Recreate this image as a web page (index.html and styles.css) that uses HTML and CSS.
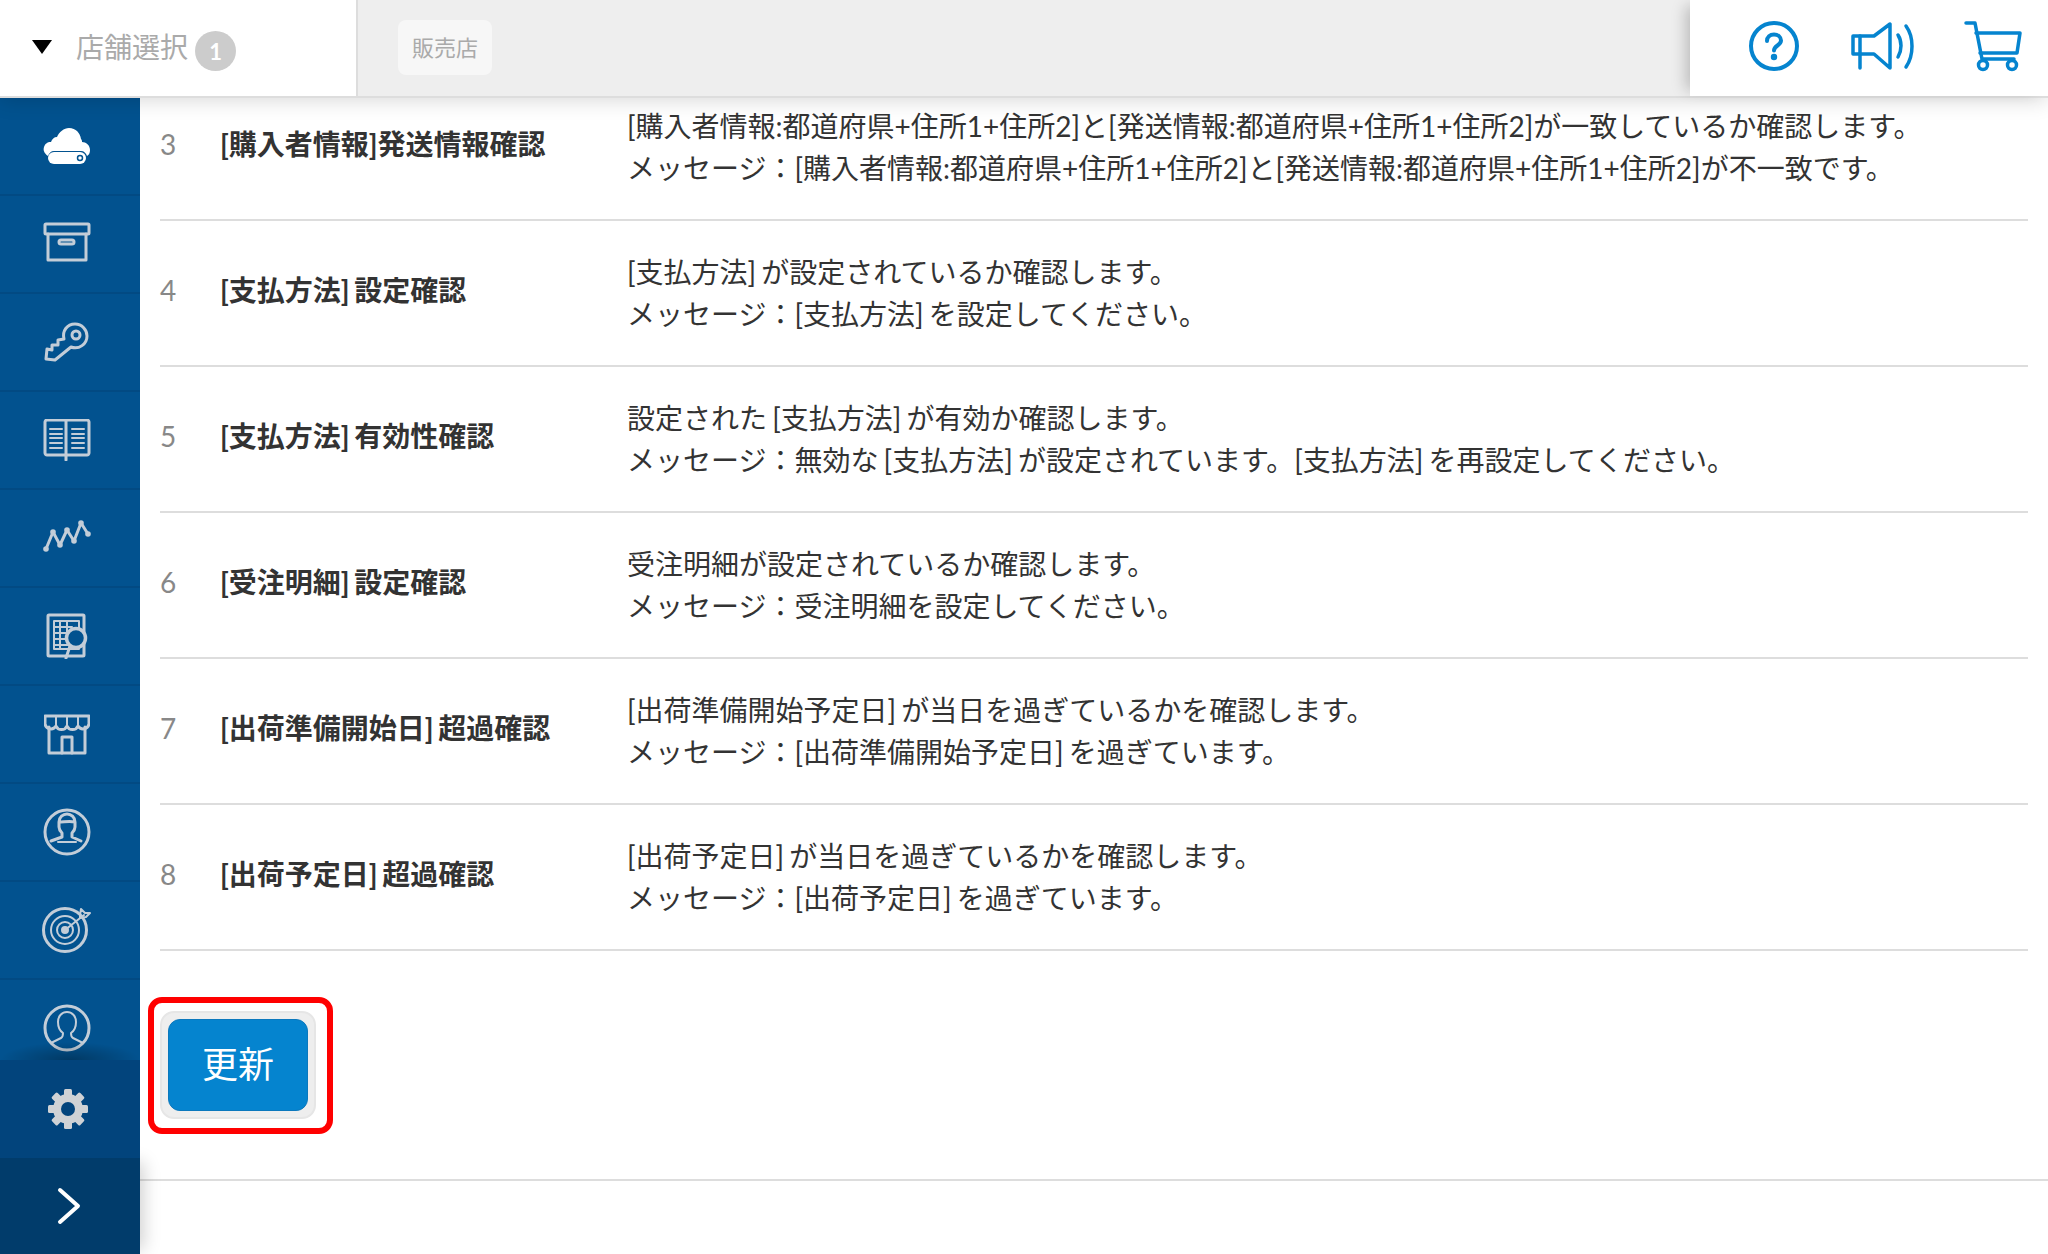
FILE: index.html
```html
<!DOCTYPE html>
<html lang="ja">
<head>
<meta charset="utf-8">
<title>設定</title>
<link rel="stylesheet" href="styles.css">
</head>
<body>
<div class="app">
  <header class="topbar">
    <div class="store-select">
      <span class="caret"></span>
      <span class="store-label">店舗選択</span>
      <span class="store-count">1</span>
    </div>
    <div class="tabs"><span class="tab">販売店</span></div>
    <div class="actions">
      <svg class="act" width="52" height="52" viewBox="0 0 52 52" fill="none" stroke="#0584cf" stroke-width="4" stroke-linecap="round" stroke-linejoin="round"><circle cx="26" cy="26" r="23"/><path d="M19 21c0-4 3-6.500 7-6.500s7 2.500 7 6c0 5-7 5-7 10"/><circle cx="26" cy="37" r="1.200" fill="#0584cf"/></svg>
      <svg class="act" width="66" height="50" viewBox="0 0 66 50" fill="none" stroke="#0584cf" stroke-width="3.500" stroke-linecap="round" stroke-linejoin="round"><path d="M2 15h21L39 3v44L23 33H2z"/><path d="M9 15v18M9 33v14"/><path d="M47 14c4 6 4 15 0 22"/><path d="M55 5c8 11 8 29 0 41"/></svg>
      <svg class="act" width="58" height="52" viewBox="0 0 58 52" fill="none" stroke="#0584cf" stroke-width="3.500" stroke-linecap="round" stroke-linejoin="round"><path d="M2 3h9l7 36h32"/><path d="M12 13h44l-3 20H16"/><circle cx="19" cy="45" r="4.500"/><circle cx="48" cy="45" r="4.500"/></svg>
    </div>
  </header>
  <div class="body">
    <nav class="sidebar">
      <div class="nav-list">
        <div class="nav-item"><svg width="48" height="38" viewBox="0 0 48 38"><path fill="#fff" d="M5 29C1 26 0 23 1 20c1-3 3-5 7-5 1-3 3-5 6-5 2-5 7-9 12-9 7 0 11 5 12 11 1 1 1 2 1 3 4 0 8 3 8 8 0 3-1 5-3 6-1-3-3-5-6-5H11c-3 0-5 2-6 5z"/><rect fill="#fff" x="5" y="25" width="38" height="12" rx="6"/><circle cx="37" cy="31" r="2.500" fill="none" stroke="#02528f" stroke-width="1.500"/></svg></div>
        <div class="nav-item"><svg class="line up" width="48" height="40" viewBox="0 0 48 40"><rect x="2" y="2" width="44" height="10" rx="1"/><path d="M5 12v26h38V12"/><rect x="16" y="18" width="15" height="4" rx="2"/></svg></div>
        <div class="nav-item"><svg class="line" width="46" height="40" viewBox="0 0 46 40"><path d="M2 37l1-10 5 1 0-5 6 0 0-5 6-1c-2-8 3-15 11-15 7 0 12 6 12 12 0 8-8 14-16 11L11 38z"/><circle cx="32" cy="13" r="4"/></svg></div>
        <div class="nav-item"><svg class="line" width="48" height="42" viewBox="0 0 48 42"><path d="M24 36H4c-1 0-2-1-2-2V3c0-1 1-2 2-2h40c1 0 2 1 2 2v31c0 1-1 2-2 2zM23 2v39"/><path class="thin" d="M7 10h12M7 15h12M7 19h12M7 24h12M7 29h12M29 10h12M29 15h12M29 19h12M29 24h12M29 29h12"/></svg></div>
        <div class="nav-item"><svg class="line up" width="50" height="34" viewBox="0 0 50 34"><path d="M4 30L11 13 18 26 25 11 32 22 39 4 46 15"/><g class="dots"><circle cx="4" cy="30" r="2.800"/><circle cx="11" cy="13" r="2.800"/><circle cx="18" cy="26" r="2.800"/><circle cx="25" cy="11" r="2.800"/><circle cx="32" cy="22" r="2.800"/><circle cx="39" cy="4" r="2.800"/><circle cx="46" cy="15" r="2.800"/></g></svg></div>
        <div class="nav-item"><svg class="line" width="42" height="46" viewBox="0 0 42 46"><rect x="2" y="2" width="36" height="41" rx="1"/><path class="thin" d="M8 8h25v28H8zM8 14h18M8 20h16M8 26h16M8 32h18M14 8v28M21 8v12"/><circle cx="30" cy="25" r="9.500" class="lens"/><path d="M24 33l-4 12"/></svg></div>
        <div class="nav-item"><svg class="line" width="46" height="42" viewBox="0 0 46 42"><path d="M5 14v26h36V14"/><path d="M1 3h44v8a6 6 0 0 1-11 2 6 6 0 0 1-11 0 6 6 0 0 1-11 0 6 6 0 0 1-11-2z"/><path class="thin" d="M12 3v10M23 3v10M34 3v10"/><path d="M18 40V24h10v16"/></svg></div>
        <div class="nav-item"><svg class="line" width="48" height="48" viewBox="0 0 48 48"><circle cx="24" cy="24" r="22"/><path d="M16 14c0-5 4-8 8-8s8 3 8 8v5c0 3-2 5-3 6v4l9 4M16 14v5c0 3 2 5 3 6v4l-11 4M16 14c5 0 11-1 16 0"/><path d="M15 34h18" class="thin"/></svg></div>
        <div class="nav-item"><svg class="line" width="50" height="46" viewBox="0 0 50 46"><circle cx="23" cy="23" r="21.500"/><circle cx="23" cy="23" r="14" class="thin"/><circle cx="23" cy="23" r="8" class="thin"/><circle cx="23" cy="23" r="2.500" class="fillc"/><path class="thin" d="M23 23L42 8"/><path class="thin" d="M38 8l1-6 4 4 5 0-4 4-6 1z"/></svg></div>
        <div class="nav-item"><svg class="line" width="48" height="48" viewBox="0 0 48 48"><circle cx="24" cy="24" r="22"/><path class="thin" d="M8 39l10-5c2-1 2-3 2-5-3-2-5-6-5-11 0-6 4-10 9-10s9 4 9 10c0 5-2 9-5 11 0 2 0 4 2 5l10 5"/></svg></div>
      </div>
      <div class="nav-settings">
        <svg width="40" height="40" viewBox="0 0 40 40"><g fill="#cfd2d5"><rect x="16" y="0" width="8" height="40" rx="1.500"/><rect x="16" y="0" width="8" height="40" rx="1.500" transform="rotate(45 20 20)"/><rect x="16" y="0" width="8" height="40" rx="1.500" transform="rotate(90 20 20)"/><rect x="16" y="0" width="8" height="40" rx="1.500" transform="rotate(135 20 20)"/></g><circle cx="20" cy="20" r="11" fill="none" stroke="#cfd2d5" stroke-width="8"/><circle cx="20" cy="20" r="7" fill="#02447c"/></svg>
      </div>
      <div class="nav-toggle"><svg width="24" height="38" viewBox="0 0 24 38" fill="none" stroke="#fff" stroke-width="4" stroke-linecap="round" stroke-linejoin="round"><path d="M3 3l18 16L3 35"/></svg></div>
    </nav>
    <main class="content">
      <div class="check-table">
        <div class="row"><span class="num">3</span><span class="name">[購入者情報]発送情報確認</span><div class="desc"><p>[購入者情報:都道府県+住所1+住所2]と[発送情報:都道府県+住所1+住所2]が一致しているか確認します。</p><p>メッセージ：[購入者情報:都道府県+住所1+住所2]と[発送情報:都道府県+住所1+住所2]が不一致です。</p></div></div>
        <div class="row"><span class="num">4</span><span class="name">[支払方法] 設定確認</span><div class="desc"><p>[支払方法] が設定されているか確認します。</p><p>メッセージ：[支払方法] を設定してください。</p></div></div>
        <div class="row"><span class="num">5</span><span class="name">[支払方法] 有効性確認</span><div class="desc"><p>設定された [支払方法] が有効か確認します。</p><p>メッセージ：無効な [支払方法] が設定されています。[支払方法] を再設定してください。</p></div></div>
        <div class="row"><span class="num">6</span><span class="name">[受注明細] 設定確認</span><div class="desc"><p>受注明細が設定されているか確認します。</p><p>メッセージ：受注明細を設定してください。</p></div></div>
        <div class="row"><span class="num">7</span><span class="name">[出荷準備開始日] 超過確認</span><div class="desc"><p>[出荷準備開始予定日] が当日を過ぎているかを確認します。</p><p>メッセージ：[出荷準備開始予定日] を過ぎています。</p></div></div>
        <div class="row"><span class="num">8</span><span class="name">[出荷予定日] 超過確認</span><div class="desc"><p>[出荷予定日] が当日を過ぎているかを確認します。</p><p>メッセージ：[出荷予定日] を過ぎています。</p></div></div>
      </div>
      <div class="button-area">
        <div class="highlight"><div class="btn-well"><button class="btn-update">更新</button></div></div>
      </div>
      <div class="footer-line"></div>
    </main>
  </div>
</div>
</body>
</html>
```
FILE: styles.css
```css
* { box-sizing: border-box; }
html, body { margin: 0; height: 100%; }
body { font-family: Lato, "Noto Sans CJK JP", sans-serif; color: #333; background: #fff; overflow: hidden; }
.app { width: 2048px; height: 1254px; display: flex; flex-direction: column; overflow: hidden; }

.topbar { height: 98px; flex: none; display: flex; background: #eee; border-bottom: 2px solid #ddd; position: relative; z-index: 2; box-shadow: 0 2px 20px rgba(0,0,0,.16); }
.store-select { width: 358px; background: #fff; border-right: 2px solid #ddd; display: flex; align-items: center; padding-left: 32px; flex: none; }
.caret { width: 0; height: 0; border-left: 10px solid transparent; border-right: 10px solid transparent; border-top: 14px solid #000; margin-right: 24px; margin-top: -3px; }
.store-label { font-size: 28px; color: #aaa; margin-top: -4px; }
.store-count { width: 41px; height: 40px; margin-left: 7px; border-radius: 50%; background: #ccc; color: #fff; font-weight: 700; font-size: 22px; display: flex; align-items: center; justify-content: center; margin-top: 6px; }
.tabs { flex: 1; display: flex; align-items: center; padding-left: 40px; }
.tab { width: 94px; height: 55px; border-radius: 8px; background: #f7f7f7; color: #aaa; font-size: 22px; display: flex; align-items: center; justify-content: center; padding-bottom: 2px; margin-top: -2px; }
.actions { width: 358px; flex: none; background: #fff; display: flex; align-items: center; padding-left: 58px; box-shadow: -10px 0 14px -6px rgba(0,0,0,.22); }
.actions .act { flex: none; margin-top: -4px; }
.actions .act:nth-child(1) { margin-right: 51px; }
.actions .act:nth-child(2) { margin-right: 47px; }

.body { flex: 1; display: flex; min-height: 0; }
.sidebar { width: 140px; flex: none; display: flex; flex-direction: column; background: #02528f; position: relative; z-index: 1; }
.nav-list { flex: 1; min-height: 0; overflow: hidden; }
.nav-item { height: 98px; display: flex; align-items: center; justify-content: center; border-bottom: 2px solid #024a83; padding-right: 7px; }
.line { fill: none; stroke: #c3cdd8; stroke-width: 3; stroke-linecap: round; stroke-linejoin: round; }
.line.up { margin-bottom: 4px; }
.line .thin { stroke-width: 2; }
.line .dots { fill: #c3cdd8; stroke: none; }
.line .lens { fill: #02528f; stroke-width: 3.500; }
.line .fillc { fill: #c3cdd8; }
.nav-settings { height: 98px; flex: none; background: #02447c; display: flex; align-items: center; justify-content: center; padding-right: 4px; position: relative; }
.nav-settings::before { content: ""; position: absolute; left: 0; right: 0; top: -18px; height: 18px; background: radial-gradient(ellipse 50% 100% at 50% 100%, rgba(0,0,0,.3), rgba(0,0,0,0)); }
.nav-toggle { height: 96px; flex: none; background: #013c6b; display: flex; align-items: center; justify-content: center; padding-right: 3px; box-shadow: 8px 0 16px -4px rgba(0,0,0,.18); }

.content { flex: 1; padding: 0 20px; display: flex; flex-direction: column; position: relative; min-width: 0; }
.check-table { margin-top: -23px; }
.row { height: 146px; display: grid; grid-template-columns: 60px 407px 1fr; align-items: center; border-bottom: 2px solid #ddd; }
.num { font-size: 28px; color: #888; padding-bottom: 6px; }
.name { font-weight: 700; font-size: 28px; word-spacing: -2px; color: #333; white-space: nowrap; padding-bottom: 8px; }
.desc p { margin: 0; font-size: 28px; line-height: 42px; word-spacing: -2px; white-space: nowrap; color: #333; }
.button-area { height: 228px; padding-top: 46px; margin-left: -12px; flex: none; }
.highlight { width: 185px; height: 137px; border: 6px solid #f00; border-radius: 14px; padding: 8px 6px; background: #fff; }
.btn-well { width: 156px; height: 108px; background: #eee; border: 2px solid #e6e6e6; border-radius: 14px; padding: 6px; }
.btn-update { width: 140px; height: 92px; border: 1px solid #0b78bd; border-radius: 12px; background: #0584cf; color: #fff; font-family: "Noto Sans CJK JP", sans-serif; font-size: 36px; padding: 0 0 6px; display: block; }
.footer-line { position: absolute; left: 0; right: 0; top: 1081px; border-top: 2px solid #ddd; }
```
